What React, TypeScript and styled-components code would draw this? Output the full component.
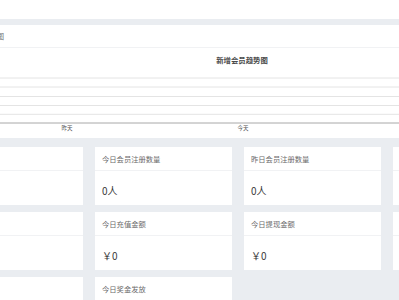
import React from "react";
import styled, { createGlobalStyle } from "styled-components";

const GlobalStyle = createGlobalStyle`
  html, body { margin: 0; padding: 0; }
  body {
    background: #eaedf1;
    font-family: "Noto Sans CJK SC", "Noto Sans", sans-serif;
    overflow: hidden;
  }
`;

const Page = styled.div`
  width: 399px;
  height: 300px;
  overflow: hidden;
  background: #eaedf1;
`;

const TopBar = styled.div`
  height: 19px;
  background: #ffffff;
`;

const Content = styled.div`
  width: 584px;
  margin-left: -54px;
  padding-top: 6px;
  display: flex;
  flex-direction: column;
  gap: 9px;
`;

const ChartCard = styled.section`
  background: #ffffff;
  display: flex;
  flex-direction: column;
`;

const CardHeader = styled.div<{ $h: number }>`
  height: ${(p) => p.$h}px;
  box-sizing: border-box;
  border-bottom: 1px solid #f1f2f4;
  padding-left: 7px;
  display: flex;
  align-items: center;
  font-size: 7.3px;
  color: #6b6b6b;
  white-space: nowrap;
`;

const ChartBody = styled.div`
  height: 90px;
`;

const StatGrid = styled.div`
  display: grid;
  grid-template-columns: repeat(4, 137px);
  column-gap: 12px;
  row-gap: 7px;
`;

const StatCard = styled.div<{ $empty?: boolean }>`
  height: 58px;
  background: ${(p) => (p.$empty ? "transparent" : "#ffffff")};
  display: flex;
  flex-direction: column;
`;

const StatValue = styled.div`
  flex: 1;
  display: flex;
  align-items: center;
  padding: 4px 0 0 7px;
  font-size: 10px;
  color: #3a3a3a;
  white-space: nowrap;
`;

const lines = [30, 39, 48.5, 57.5, 66.3];

const TrendChart: React.FC = () => (
  <svg width="584" height="90" viewBox="0 0 584 90">
    <text
      x="296"
      y="15"
      textAnchor="middle"
      fontSize="7.4"
      fontWeight="bold"
      fill="#4a4a4a"
      fontFamily="Noto Sans CJK SC, sans-serif"
    >
      新增会员趋势图
    </text>
    {lines.map((y) => (
      <line key={y} x1="30" x2="560" y1={y} y2={y} stroke="#e4e4e4" strokeWidth="1" />
    ))}
    <line x1="30" x2="560" y1="75" y2="75" stroke="#a8a8a8" strokeWidth="1" />
    <text x="121" y="81.5" textAnchor="middle" fontSize="5.5" fill="#555" fontFamily="Noto Sans CJK SC, sans-serif">
      昨天
    </text>
    <text x="297" y="81.5" textAnchor="middle" fontSize="5.5" fill="#555" fontFamily="Noto Sans CJK SC, sans-serif">
      今天
    </text>
  </svg>
);

type Stat = { title?: string; value?: string };

const stats: Stat[] = [
  { title: "会员总数", value: "0人" },
  { title: "今日会员注册数量", value: "0人" },
  { title: "昨日会员注册数量", value: "0人" },
  { title: "会员总数量", value: "0人" },
  { title: "充值总金额", value: "￥0" },
  { title: "今日充值金额", value: "￥0" },
  { title: "今日提现金额", value: "￥0" },
  { title: "提现总金额", value: "￥0" },
  { title: "奖金总发放", value: "￥0" },
  { title: "今日奖金发放", value: "￥0" },
  {},
  {},
];

export default function App() {
  return (
    <>
      <GlobalStyle />
      <Page>
        <TopBar />
        <Content>
          <ChartCard>
            <CardHeader $h={23}>会员增长统计图</CardHeader>
            <ChartBody>
              <TrendChart />
            </ChartBody>
          </ChartCard>
          <StatGrid>
            {stats.map((s, i) =>
              s.title ? (
                <StatCard key={i}>
                  <CardHeader $h={24}>{s.title}</CardHeader>
                  <StatValue>{s.value}</StatValue>
                </StatCard>
              ) : (
                <StatCard key={i} $empty />
              )
            )}
          </StatGrid>
        </Content>
      </Page>
    </>
  );
}
